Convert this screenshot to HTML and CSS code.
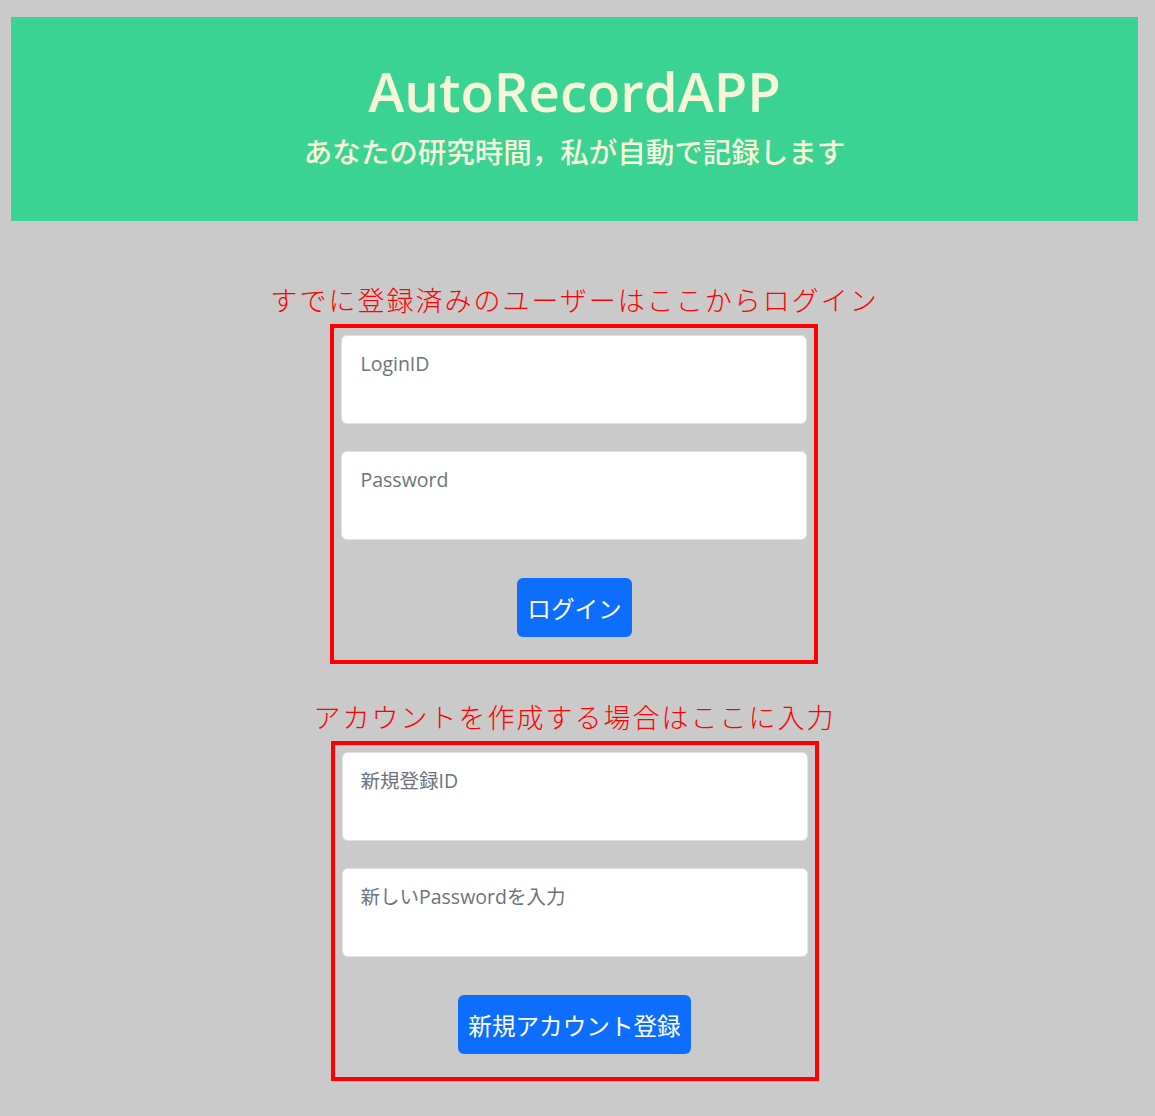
FILE: index.html
```html
<!DOCTYPE html>
<html lang="ja">
<head>
<meta charset="utf-8">
<title>AutoRecordAPP</title>
<link rel="stylesheet" href="styles.css">
</head>
<body>
<header class="hero">
  <h1 class="hero-title">AutoRecordAPP</h1>
  <p class="hero-sub">あなたの研究時間，私が自動で記録します</p>
</header>
<main class="forms">
  <section class="panel-wrap">
    <p class="caption">すでに登録済みのユーザーはここからログイン</p>
    <form class="panel">
      <input class="field" type="text" placeholder="LoginID">
      <input class="field" type="password" placeholder="Password">
      <button class="btn" type="button">ログイン</button>
    </form>
  </section>
  <section class="panel-wrap second">
    <p class="caption">アカウントを作成する場合はここに入力</p>
    <form class="panel">
      <input class="field" type="text" placeholder="新規登録ID">
      <input class="field" type="password" placeholder="新しいPasswordを入力">
      <button class="btn" type="button">新規アカウント登録</button>
    </form>
  </section>
</main>
</body>
</html>
```

FILE: styles.css
```css
* { box-sizing: border-box; }
body {
  margin: 0;
  padding: 17px 17px 30px 11px;
  background: #cacaca;
  font-family: "Open Sans", "Noto Sans CJK JP", sans-serif;
}
.hero {
  height: 204px;
  background: #3ad393;
  display: flex;
  flex-direction: column;
  align-items: center;
  padding-top: 39px;
  color: #f7f5d8;
}
.hero-title {
  margin: 0;
  font-size: 54.5px;
  line-height: 70px;
  font-weight: 600;
  font-family: "Open Sans", sans-serif;
}
.hero-sub {
  margin: 5px 0 0;
  font-size: 28.5px;
  line-height: 40px;
  font-weight: 500;
  font-family: "Noto Sans CJK JP", sans-serif;
}
.forms {
  display: flex;
  flex-direction: column;
  align-items: center;
  padding-top: 59px;
}
.panel-wrap {
  display: flex;
  flex-direction: column;
  align-items: center;
}
.panel-wrap.second { margin-top: 33px; }
.caption {
  margin: 0 0 4px;
  color: #ff0000;
  font-family: "Noto Sans CJK JP", sans-serif;
  font-weight: 300;
  font-size: 27px;
  line-height: 40px;
  letter-spacing: 2px;
}
.panel {
  width: 488px;
  border: 4px solid #ff0000;
  padding: 7px 7px 23px;
  display: flex;
  flex-direction: column;
  align-items: center;
}
.field {
  width: 100%;
  height: 89px;
  margin: 0 0 27px;
  border: 1px solid #dfe2e6;
  border-radius: 6px;
  background: #fff;
  padding: 0 18px 33px;
  font-family: "Open Sans", "Noto Sans CJK JP", sans-serif;
  font-size: 19.5px;
  color: #212529;
}
.field:last-of-type { margin-bottom: 38px; }
.field::placeholder { color: #6d737a; }
.btn {
  height: 59px;
  padding: 0 10.8px;
  border: none;
  border-radius: 6px;
  background: #0d6efd;
  color: #fff;
  font-family: "Noto Sans CJK JP", sans-serif;
  font-size: 23.6px;
  font-weight: 400;
}
```
